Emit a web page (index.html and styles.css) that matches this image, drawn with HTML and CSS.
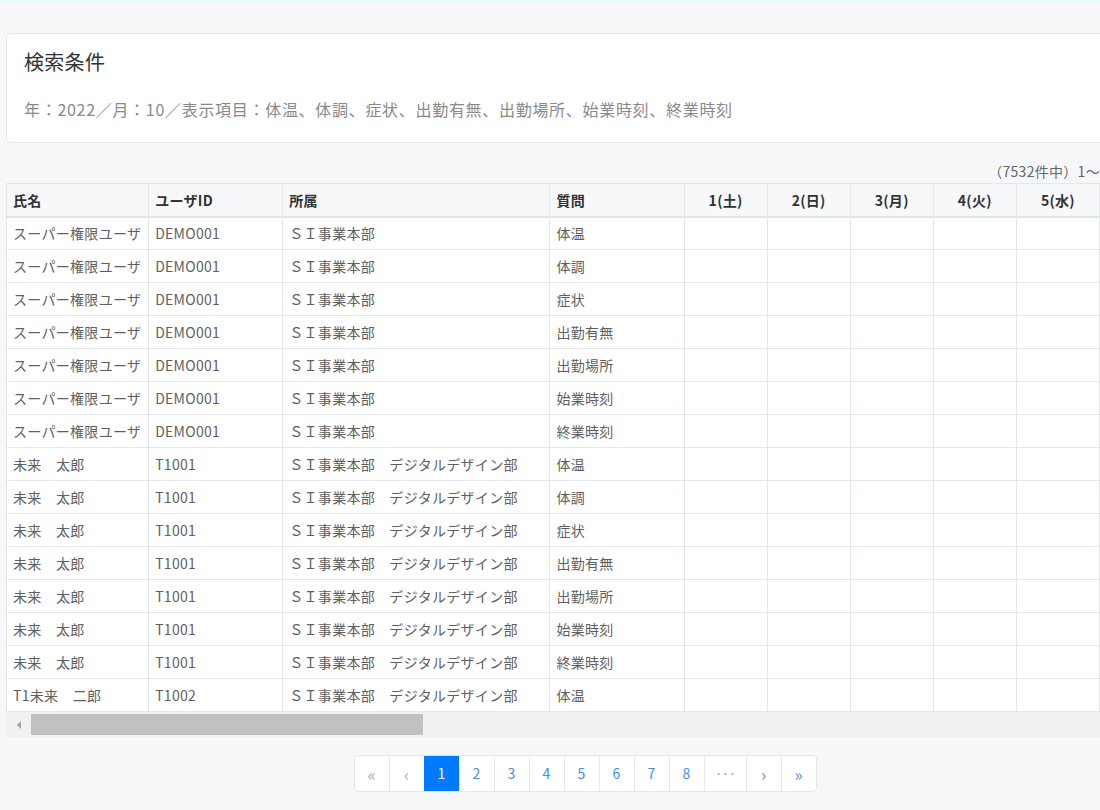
FILE: index.html
```html
<!DOCTYPE html>
<html lang="ja">
<head>
<meta charset="utf-8">
<title>検索結果</title>
<link rel="stylesheet" href="styles.css">
</head>
<body>
<div class="topline"></div>
<main class="page">
  <section class="card">
    <h2 class="card-title">検索条件</h2>
    <p class="card-sub">年：2022／月：10／表示項目：体温、体調、症状、出勤有無、出勤場所、始業時刻、終業時刻</p>
  </section>
  <div class="count"><span>（7532件中）1〜</span></div>
  <div class="table-wrap">
    <table class="grid">
      <colgroup>
        <col class="c-name"><col class="c-id"><col class="c-dept"><col class="c-q">
        <col class="c-day"><col class="c-day"><col class="c-day"><col class="c-day"><col class="c-day">
      </colgroup>
      <thead>
        <tr><th>氏名</th><th>ユーザID</th><th>所属</th><th>質問</th><th class="d">1(土)</th><th class="d">2(日)</th><th class="d">3(月)</th><th class="d">4(火)</th><th class="d">5(水)</th></tr>
      </thead>
      <tbody>
        <tr><td>スーパー権限ユーザ</td><td>DEMO001</td><td>ＳＩ事業本部</td><td>体温</td><td></td><td></td><td></td><td></td><td></td></tr>
        <tr><td>スーパー権限ユーザ</td><td>DEMO001</td><td>ＳＩ事業本部</td><td>体調</td><td></td><td></td><td></td><td></td><td></td></tr>
        <tr><td>スーパー権限ユーザ</td><td>DEMO001</td><td>ＳＩ事業本部</td><td>症状</td><td></td><td></td><td></td><td></td><td></td></tr>
        <tr><td>スーパー権限ユーザ</td><td>DEMO001</td><td>ＳＩ事業本部</td><td>出勤有無</td><td></td><td></td><td></td><td></td><td></td></tr>
        <tr><td>スーパー権限ユーザ</td><td>DEMO001</td><td>ＳＩ事業本部</td><td>出勤場所</td><td></td><td></td><td></td><td></td><td></td></tr>
        <tr><td>スーパー権限ユーザ</td><td>DEMO001</td><td>ＳＩ事業本部</td><td>始業時刻</td><td></td><td></td><td></td><td></td><td></td></tr>
        <tr><td>スーパー権限ユーザ</td><td>DEMO001</td><td>ＳＩ事業本部</td><td>終業時刻</td><td></td><td></td><td></td><td></td><td></td></tr>
        <tr><td>未来　太郎</td><td>T1001</td><td>ＳＩ事業本部　デジタルデザイン部</td><td>体温</td><td></td><td></td><td></td><td></td><td></td></tr>
        <tr><td>未来　太郎</td><td>T1001</td><td>ＳＩ事業本部　デジタルデザイン部</td><td>体調</td><td></td><td></td><td></td><td></td><td></td></tr>
        <tr><td>未来　太郎</td><td>T1001</td><td>ＳＩ事業本部　デジタルデザイン部</td><td>症状</td><td></td><td></td><td></td><td></td><td></td></tr>
        <tr><td>未来　太郎</td><td>T1001</td><td>ＳＩ事業本部　デジタルデザイン部</td><td>出勤有無</td><td></td><td></td><td></td><td></td><td></td></tr>
        <tr><td>未来　太郎</td><td>T1001</td><td>ＳＩ事業本部　デジタルデザイン部</td><td>出勤場所</td><td></td><td></td><td></td><td></td><td></td></tr>
        <tr><td>未来　太郎</td><td>T1001</td><td>ＳＩ事業本部　デジタルデザイン部</td><td>始業時刻</td><td></td><td></td><td></td><td></td><td></td></tr>
        <tr><td>未来　太郎</td><td>T1001</td><td>ＳＩ事業本部　デジタルデザイン部</td><td>終業時刻</td><td></td><td></td><td></td><td></td><td></td></tr>
        <tr><td>T1未来　二郎</td><td>T1002</td><td>ＳＩ事業本部　デジタルデザイン部</td><td>体温</td><td></td><td></td><td></td><td></td><td></td></tr>
      </tbody>
    </table>
  </div>
  <div class="hscroll">
    <span class="arrow-left"></span>
    <span class="thumb"></span>
  </div>
  <nav class="pager">
    <ul class="pagination">
      <li class="pg disabled arrow">«</li>
      <li class="pg disabled arrow">‹</li>
      <li class="pg active">1</li>
      <li class="pg">2</li>
      <li class="pg">3</li>
      <li class="pg">4</li>
      <li class="pg">5</li>
      <li class="pg">6</li>
      <li class="pg">7</li>
      <li class="pg">8</li>
      <li class="pg dots">···</li>
      <li class="pg arrow">›</li>
      <li class="pg arrow">»</li>
    </ul>
  </nav>
</main>
</body>
</html>
```
FILE: styles.css
```css
html, body {
  margin: 0;
  padding: 0;
}
body {
  background: #f6f7f9;
  font-family: "Noto Sans CJK JP", "Noto Sans", sans-serif;
  color: #555;
  overflow: hidden;
  width: 1100px;
  height: 810px;
}
.topline {
  height: 2px;
  background: #e3fbfb;
}
.page {
  width: 1154px;
  padding-left: 6px;
  padding-top: 31px;
  box-sizing: content-box;
}
.card {
  background: #fff;
  border: 1px solid #e3e6ea;
  border-radius: 4px;
  height: 108px;
  padding: 0 17px;
  box-sizing: content-box;
}
.card-title {
  margin: 0;
  padding-top: 14px;
  font-size: 20px;
  font-weight: normal;
  color: #333;
  line-height: 28px;
  letter-spacing: 0.3px;
}
.card-sub {
  margin: 0;
  padding-top: 22px;
  font-size: 16px;
  color: #8a8a8a;
  line-height: 22px;
  letter-spacing: 0.7px;
}
.count {
  font-size: 14px;
  color: #666;
  line-height: 18px;
  margin-top: 19px;
  height: 21px;
  width: 1094px;
  display: flex;
  justify-content: flex-end;
  letter-spacing: 0.3px;
}
.table-wrap {
  width: 1154px;
  overflow: hidden;
}
.grid {
  border-collapse: collapse;
  table-layout: fixed;
  width: 1094px;
  font-size: 14px;
  letter-spacing: 0.3px;
}
.c-name { width: 142px; }
.c-id { width: 134px; }
.c-dept { width: 267px; }
.c-q { width: 134px; }
.c-day { width: 83px; }
.grid th, .grid td {
  border: 1px solid #e3e6ea;
  height: 33px;
  padding: 0 6px;
  text-align: left;
  white-space: nowrap;
  overflow: hidden;
  box-sizing: border-box;
}
.grid thead th {
  background: #f7f8fa;
  color: #333;
  font-weight: bold;
  border-bottom: 2px solid #e1e4e8;
}
.grid thead th.d {
  text-align: center;
}
.grid tbody td {
  background: #fff;
  color: #5f5f5f;
}
.hscroll {
  height: 25px;
  background: #f1f1f1;
  width: 1154px;
  display: flex;
  align-items: center;
}
.arrow-left {
  width: 0;
  height: 0;
  border-top: 4px solid transparent;
  border-bottom: 4px solid transparent;
  border-right: 4px solid #a3a3a3;
  margin-left: 11px;
}
.thumb {
  height: 21px;
  width: 392px;
  background: #c1c1c1;
  margin-left: 10px;
}
.pager {
  display: flex;
  justify-content: center;
  padding-top: 18px;
  padding-left: 4px;
}
.pagination {
  list-style: none;
  margin: 0;
  padding: 0;
  display: flex;
  border: 1px solid #e3e6ea;
  border-radius: 4px;
  background: #fff;
  overflow: hidden;
}
.pg {
  width: 35px;
  height: 35px;
  line-height: 35px;
  text-align: center;
  font-size: 14px;
  color: #4a8fde;
  border-left: 1px solid #e6e8eb;
  box-sizing: border-box;
}
.pg:first-child {
  border-left: none;
  width: 34px;
}
.pg.arrow {
  font-size: 17px;
}
.pg.disabled {
  color: #aaa;
}
.pg.active {
  background: #007bff;
  color: #fff;
  border-left-color: #007bff;
}
.pg.dots {
  width: 42px;
  color: #aaa;
  letter-spacing: -1px;
}
```
